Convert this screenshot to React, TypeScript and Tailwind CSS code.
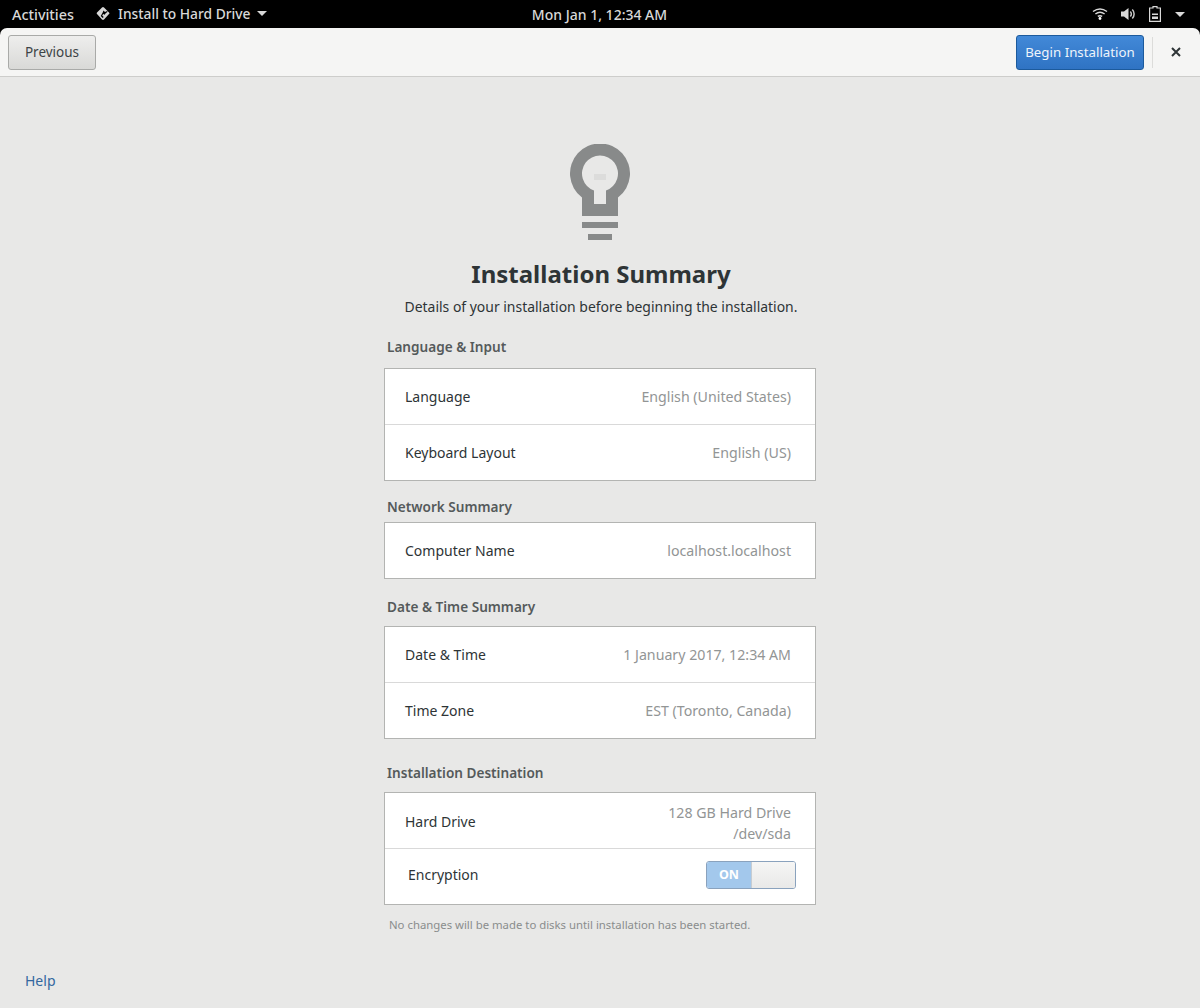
const FONT = "font-['Noto_Sans',sans-serif]";

function Caret({ className }: { className: string }) {
  return (
    <svg width="10" height="5" viewBox="0 0 10 5" className={className}>
      <path d="M0 0h10L5 5z" fill="currentColor" />
    </svg>
  );
}

function TopBar() {
  return (
    <div className="grid h-7 grid-cols-[1fr_auto_1fr] items-center bg-black pl-3 pr-[15px] text-[14px] font-medium text-[#d8d8d8]">
      <div className="flex items-center">
        <span className="pt-px text-[14.400px]">Activities</span>
        <svg width="14" height="13" viewBox="0 0 14 13" className="ml-[22px]">
          <path d="M6 .500a1.500 1.500 0 0 1 2 0l5 5a1 1 0 0 1 0 1.500l-5 5.500a1.500 1.500 0 0 1-2 0l-5-5.500a1.200 1.200 0 0 1 0-1.500z" fill="#d8d8d8" />
          <path d="M7.500 3.500l1.500 1.500 2-1 .7.700-2 1.500-1 1.500-1.500-.7-1 1.500 1.500 1.500-1 1-2-2 2-3.500z" fill="#000" />
        </svg>
        <span className="ml-2 text-[13.800px]">Install to Hard Drive</span>
        <Caret className="ml-[6px] text-[#d8d8d8]" />
      </div>
      <div className="ml-[2px] text-center">Mon Jan 1, 12:34 AM</div>
      <div className="flex items-center justify-end">
        <svg width="16" height="12" viewBox="0 0 16 12" className="mr-[12px]">
          <path d="M1 3.500Q8-1.500 15 3.500M3.400 6Q8 2.600 12.600 6M5.800 8.400Q8 7 10.200 8.400" fill="none" stroke="#d8d8d8" strokeWidth="1.500" />
          <circle cx="8" cy="10.500" r="1.400" fill="#fff" />
        </svg>
        <svg width="16" height="14" viewBox="0 0 16 14" className="mr-[13px]">
          <path d="M1 4.500h3L8.500 1v12L4 9.500H1z" fill="#d8d8d8" />
          <path d="M10.300 4.500a3.500 3.500 0 0 1 0 5M12.300 2.500a6.500 6.500 0 0 1 0 9" fill="none" stroke="#c8c8c8" strokeWidth="1.500" />
        </svg>
        <svg width="12" height="16" viewBox="0 0 12 16" className="mr-[14px]">
          <path d="M4 .600h4V2h3.400v13.400H.6V2H4z" fill="none" stroke="#d8d8d8" strokeWidth="1.200" />
          <path d="M3 7.500h6V9H3zM3 10.500h6V13H3z" fill="#d8d8d8" />
        </svg>
        <Caret className="text-[#d8d8d8]" />
      </div>
    </div>
  );
}

function HeaderBar() {
  return (
    <div className="flex h-[49px] items-center rounded-t-[7px] border-b border-[#cdcdcb] bg-[#f5f5f4] pl-2 pr-[19px]">
      <button className="h-[35px] w-[88px] rounded-[3px] border border-[#a9aaa8] bg-gradient-to-b from-[#eeeeed] to-[#d9d9d7] text-[13.500px] text-[#3d4446]">
        Previous
      </button>
      <div className="flex-1" />
      <button className="h-[35px] w-[128px] rounded-[3px] border border-[#1c5a9c] bg-gradient-to-b from-[#4289d8] to-[#2f73c3] pt-px text-[13.300px] text-[#eef4fb]">
        Begin Installation
      </button>
      <div className="ml-2 h-[31px] w-px bg-[#dcdcda]" />
      <svg width="10" height="10" viewBox="0 0 10 10" className="ml-[18px]">
        <path d="M1 1l8 8M9 1l-8 8" stroke="#2e3436" strokeWidth="2" />
      </svg>
    </div>
  );
}

function BulbIcon() {
  return (
    <svg width="60" height="96" viewBox="0 0 60 96" className="mx-auto">
      <path
        fillRule="evenodd"
        fill="#888a8a"
        d="M12 53.500A30 30 0 1 1 48 53.500V72H12ZM24 46.500A18 18 0 1 1 36 46.500V60H24Z"
      />
      <rect x="12" y="78" width="36" height="6" fill="#888a8a" />
      <rect x="18" y="90" width="24" height="6" fill="#888a8a" />
      <rect x="24" y="30" width="12" height="6" fill="#dcdcdb" />
    </svg>
  );
}

function Row({ label, value, last }: { label: string; value: string; last?: boolean }) {
  return (
    <div className={`flex items-center justify-between pl-5 pr-6 ${last ? "h-[55px]" : "h-14 border-b border-[#d9d9d9]"}`}>
      <span className="text-[14px] text-[#2e3436]">{label}</span>
      <span className="text-[14.200px] text-[#929595]">{value}</span>
    </div>
  );
}

function SectionLabel({ children, className }: { children: string; className: string }) {
  return <div className={`pl-[3px] text-[13.600px] leading-5 font-semibold text-[#555a5b] ${className}`}>{children}</div>;
}

function Card({ children, className = "" }: { children: React.ReactNode; className?: string }) {
  return <div className={`border border-[#b3b4b2] bg-white ${className}`}>{children}</div>;
}

export default function App() {
  return (
    <div className={`flex h-[1008px] flex-col overflow-hidden bg-black ${FONT}`}>
      <TopBar />
      <HeaderBar />
      <div className="flex flex-1 flex-col bg-[#e8e8e7]">
        <div className="mx-auto mt-[67px] w-[432px] flex-1">
          <BulbIcon />
          <h1 className="mt-4 ml-[2px] text-center text-[24px] leading-9 font-bold text-[#2e3436]">Installation Summary</h1>
          <p className="mt-[5px] ml-[2px] text-center text-[13.950px] leading-5 text-[#2e3436]">
            Details of your installation before beginning the installation.
          </p>
          <SectionLabel className="mt-[20px]">Language &amp; Input</SectionLabel>
          <Card className="mt-[11px]">
            <Row label="Language" value="English (United States)" />
            <Row label="Keyboard Layout" value="English (US)" last />
          </Card>
          <SectionLabel className="mt-4">Network Summary</SectionLabel>
          <Card className="mt-[5px]">
            <Row label="Computer Name" value="localhost.localhost" last />
          </Card>
          <SectionLabel className="mt-[18px]">Date &amp; Time Summary</SectionLabel>
          <Card className="mt-[9px]">
            <Row label="Date &amp; Time" value="1 January 2017, 12:34 AM" />
            <Row label="Time Zone" value="EST (Toronto, Canada)" last />
          </Card>
          <SectionLabel className="mt-6">Installation Destination</SectionLabel>
          <Card className="mt-[9px]">
            <div className="flex h-14 items-center justify-between border-b border-[#d9d9d9] pl-5 pr-6">
              <span className="pt-[2px] text-[14px] text-[#2e3436]">Hard Drive</span>
              <span className="pt-[5px] text-right text-[14.200px] leading-[21px] text-[#929595]">
                128 GB Hard Drive
                <br />
                /dev/sda
              </span>
            </div>
            <div className="flex h-[55px] items-center justify-between pb-[3px] pl-[23px] pr-[19px]">
              <span className="mb-[2px] text-[14px] text-[#2e3436]">Encryption</span>
              <div className="flex h-7 w-[90px] overflow-hidden rounded-[3px] border border-[#8aa2bd]">
                <div className="flex w-11 items-center justify-center bg-[#a3c8ec] text-[12.500px] font-bold text-white">ON</div>
                <div className="flex-1 border-l border-[#c6ccd2] bg-gradient-to-b from-[#f6f6f5] to-[#e9e9e8]" />
              </div>
            </div>
          </Card>
          <p className="mt-3 pl-[5px] text-[11.350px] leading-4 text-[#8a8d8d]">
            No changes will be made to disks until installation has been started.
          </p>
        </div>
        <a className="mb-[17px] ml-[25px] text-[14px] leading-5 text-[#33679f]">Help</a>
      </div>
    </div>
  );
}
